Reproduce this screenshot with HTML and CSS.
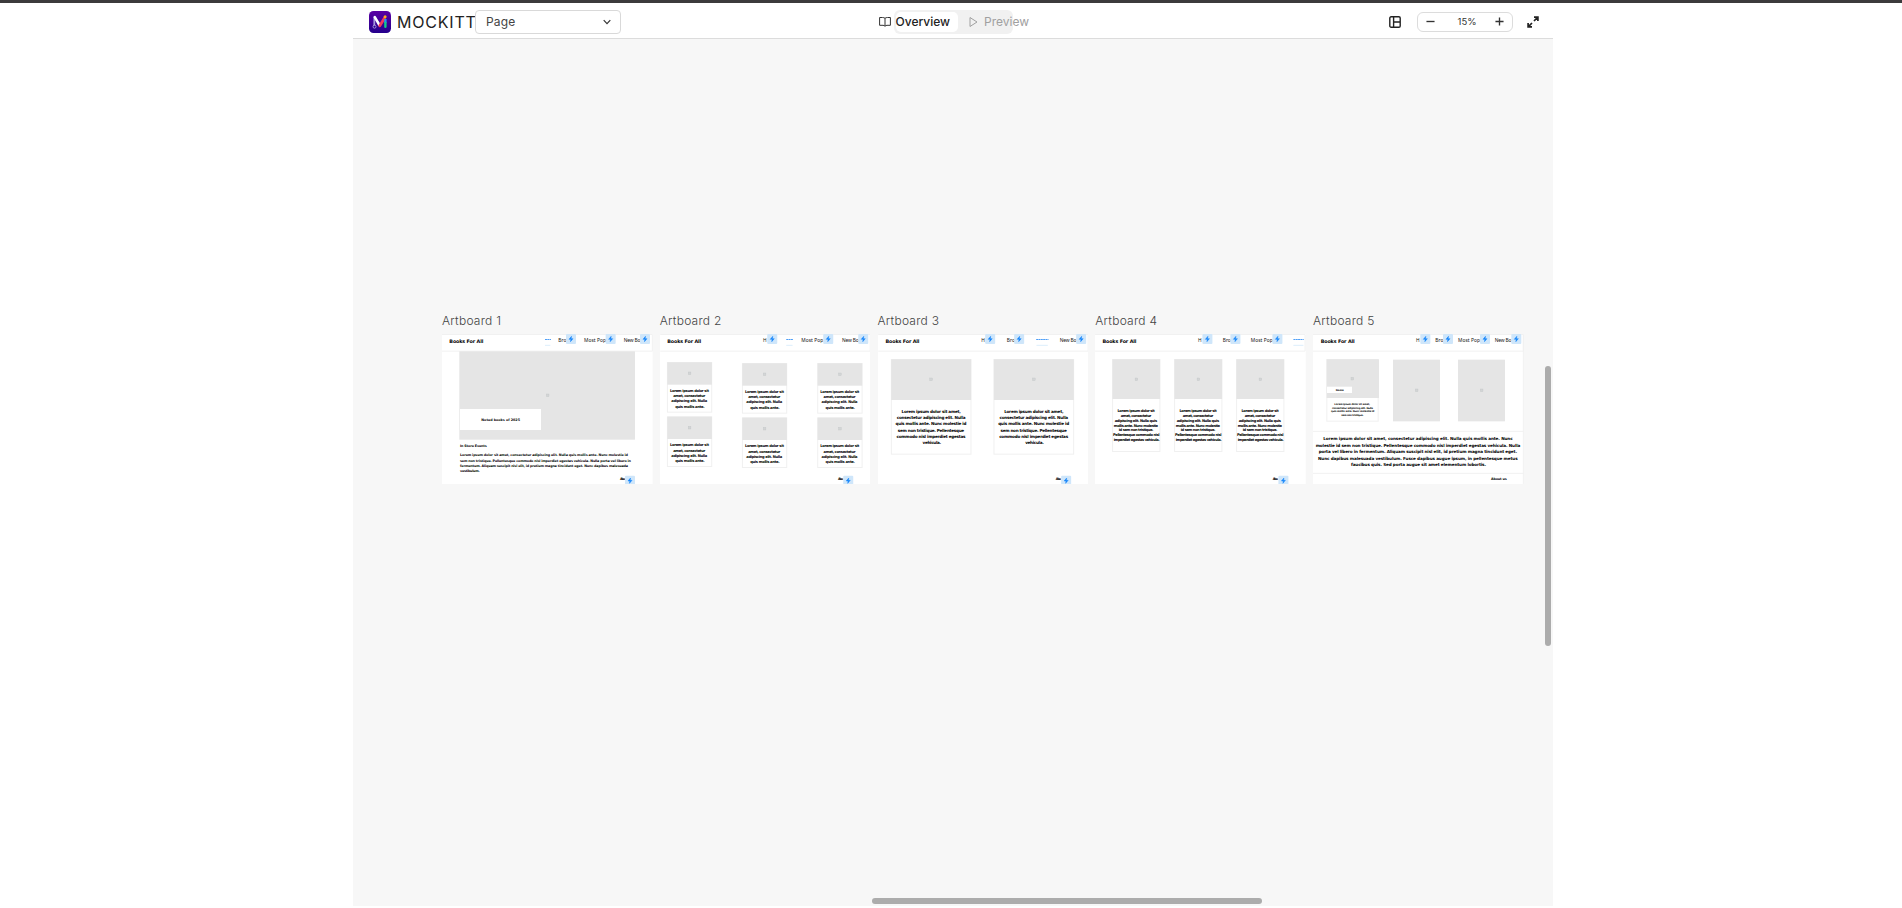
FILE: index.html
```html
<!DOCTYPE html>
<html lang="en">
<head>
<meta charset="utf-8">
<title>Mockitt</title>
<link rel="stylesheet" href="styles.css">
</head>
<body>
<div class="topline"></div>
<div class="app">
  <header class="bar">
    <div class="brand">
      <svg class="logo" viewBox="0 0 22 22"><defs><linearGradient id="lg" x1="0" y1="0" x2="0" y2="1"><stop offset="0" stop-color="#5a00a4"/><stop offset="1" stop-color="#24008c"/></linearGradient></defs><rect width="22" height="22" rx="4.500" fill="url(#lg)"/><path d="M5.300 6.500v9.500" stroke="#a596dc" stroke-width="1.800" stroke-linecap="round"/><path d="M5.800 6.200l4.600 7.800" stroke="#fff" stroke-width="2.600" stroke-linecap="round"/><path d="M15.500 7l-4.700 7.800" stroke="#f0385c" stroke-width="2.800" stroke-linecap="round"/><path d="M16.400 8v4" stroke="#2196f3" stroke-width="2.400"/><path d="M16.400 12v3.800" stroke="#10c98a" stroke-width="2.400" stroke-linecap="round"/><circle cx="16.100" cy="5.800" r="1.500" fill="#ffb020"/><circle cx="5.500" cy="15.700" r="1.500" fill="#24008c" stroke="#cbbdf0" stroke-width=".7"/></svg>
      <span class="name">MOCKITT</span>
    </div>
    <div class="select"><span>Page</span><svg class="chev" viewBox="0 0 10 10"><path d="M1.700 3.200L5 6.600l3.300-3.400"/></svg></div>
    <nav class="tabs">
      <div class="tab active"><svg class="tico" viewBox="0 0 12 12"><path d="M6 2.300v8M6 2.300C5.300 1.700 4.500 1.500 3.500 1.500H.6v7.800h3.400c.9 0 1.600.4 2 1 .4-.6 1.100-1 2-1h3.400V1.500H8.500C7.500 1.500 6.700 1.700 6 2.300z"/></svg><span>Overview</span></div>
      <div class="tab"><svg class="tico play" viewBox="0 0 12 12"><path d="M2 1.500v9l7-4.500z"/></svg><span>Preview</span></div>
    </nav>
    <div class="tools">
      <svg class="panel" viewBox="0 0 12 12"><rect x=".8" y=".8" width="10.400" height="10.400" rx="1.300"/><path d="M4.600 1v10M4.600 6h6.400"/></svg>
      <div class="zoom"><svg class="pm" viewBox="0 0 10 10"><path d="M.5 5h9"/></svg><span>15%</span><svg class="pm" viewBox="0 0 10 10"><path d="M.5 5h9M5 .5v9"/></svg></div>
      <svg class="full" viewBox="0 0 12 12"><path d="M7 5l3.600-3.600M7 1.100h3.900V5M5 7l-3.600 3.600M1.100 7v3.900H5"/></svg>
    </div>
  </header>
  <main class="canvas">
    <svg class="defs" width="0" height="0"><defs>
      <g id="bolt"><rect width="30" height="30" rx="3" fill="#cfe6fa"/><path d="M16.500 7L9 16h5.500L13.500 23 21 14h-5.500z" fill="#1686fb" stroke="#1686fb" stroke-width="1.500"/></g>
      <g id="pic"><rect x="-4" y="-4" width="8" height="8" fill="#d3d5d6" stroke="#bfc2c4" stroke-width="1"/></g>
    </defs></svg>
    <div class="boards">
      <section class="board"><h2>Artboard 1</h2>
        <svg class="art" viewBox="21 87 632 450"><rect class="pg" x="21" y="87" width="632" height="450"/><path class="rule" d="M21 88.500H652V138.500H21"/>
          <text class="h" x="43" y="113" textLength="102">Books For All</text>
          <path class="on" d="M330 103.500h18"/><path class="soft" d="M330 121h16"/>
          <text class="n" x="370" y="110" textLength="24">Bro</text><text class="n" x="447" y="110" textLength="66">Most Pop</text><text class="n" x="566" y="110" textLength="50">New Bo</text>
          <use href="#bolt" x="393" y="87"/><use href="#bolt" x="512" y="87"/><use href="#bolt" x="615" y="87"/>
          <rect class="im" x="73" y="139" width="527" height="265"/><use href="#pic" x="338" y="271"/>
          <rect class="pg" x="75" y="312" width="243" height="63"/>
          <text class="b s" x="139" y="347" textLength="116">Noted books of 2025</text>
          <text class="b s" x="75" y="425" textLength="80">In Store Events</text>
          <text class="b s" x="75" y="452" textLength="504">Lorem ipsum dolor sit amet, consectetur adipiscing elit. Nulla quis mollis ante. Nunc molestie id</text>
          <text class="b s" x="75" y="470" textLength="513">sem non tristique. Pellentesque commodo nisl imperdiet egestas vehicula. Nulla porta vel libero in</text>
          <text class="b s" x="75" y="485" textLength="504">fermentum. Aliquam suscipit nisl elit, id pretium magna tincidunt eget. Nunc dapibus malesuada</text>
          <text class="b s" x="75" y="500" textLength="59">vestibulum.</text>
          <text class="b s" x="555" y="524" textLength="16">Abo</text><use href="#bolt" x="570" y="512"/>
        </svg></section>
      <section class="board"><h2>Artboard 2</h2>
        <svg class="art" viewBox="20.250 87 632 450"><rect class="pg" x="20" y="87" width="633" height="450"/><path class="rule" d="M21 88.500H651V138.500H21"/>
          <text class="h" x="42" y="113" textLength="102">Books For All</text>
          <path class="on" d="M399 103.500h20"/><path class="soft" d="M399 121h19"/>
          <text class="n" x="329" y="110" textLength="14">H</text><text class="n" x="444" y="110" textLength="66">Most Pop</text><text class="n" x="566" y="110" textLength="50">New Bo</text>
          <use href="#bolt" x="342" y="87"/><use href="#bolt" x="510" y="87"/><use href="#bolt" x="615" y="87"/>
          <defs><g id="book"><rect class="card" x="1.500" y="1.500" width="133" height="149"/><rect class="im" x="1" y="1" width="134" height="67"/><use href="#pic" x="68" y="34"/>
            <text class="b m" x="9" y="90" textLength="117">Lorem ipsum dolor sit</text><text class="b m" x="19" y="106" textLength="96">amet, consectetur</text><text class="b m" x="13" y="121" textLength="108">adipiscing elit. Nulla</text><text class="b m" x="25" y="137" textLength="88">quis mollis ante.</text></g></defs>
          <use href="#book" x="41" y="171"/><use href="#book" x="266" y="174"/><use href="#book" x="492" y="174"/>
          <use href="#book" x="41" y="334"/><use href="#book" x="266" y="337"/><use href="#book" x="492" y="337"/>
          <text class="b s" x="554" y="524" textLength="16">Abo</text><use href="#bolt" x="570" y="512"/>
        </svg></section>
      <section class="board"><h2>Artboard 3</h2>
        <svg class="art" viewBox="22.500 87 632 450"><rect class="pg" x="22" y="87" width="633" height="450"/><path class="rule" d="M23 88.500H653V138.500H23"/>
          <text class="h" x="45" y="113" textLength="102">Books For All</text>
          <path class="on" d="M497 103.500h37"/><path class="soft" d="M498 121h34"/>
          <text class="n" x="332" y="110" textLength="14">H</text><text class="n" x="409" y="110" textLength="24">Bro</text><text class="n" x="568" y="110" textLength="50">New Bo</text>
          <use href="#bolt" x="344" y="87"/><use href="#bolt" x="431" y="87"/><use href="#bolt" x="617" y="87"/>
          <defs><g id="wide"><rect class="card" x="1.500" y="1.500" width="239" height="284"/><rect class="im" x="1" y="1" width="240" height="122"/><use href="#pic" x="121" y="61"/>
            <text class="b l" x="32" y="163" textLength="178">Lorem ipsum dolor sit amet,</text><text class="b l" x="18" y="180" textLength="206">consectetur adipiscing elit. Nulla</text><text class="b l" x="14" y="199" textLength="213">quis mollis ante. Nunc molestie id</text><text class="b l" x="21" y="219" textLength="199">sem non tristique. Pellentesque</text><text class="b l" x="17" y="237" textLength="207">commodo nisl imperdiet egestas</text><text class="b l" x="95" y="255" textLength="56">vehicula.</text></g></defs>
          <use href="#wide" x="61" y="162"/><use href="#wide" x="369" y="162"/>
          <text class="b s" x="556" y="524" textLength="16">Abo</text><use href="#bolt" x="572" y="512"/>
        </svg></section>
      <section class="board"><h2>Artboard 4</h2>
        <svg class="art" viewBox="21.750 87 632 450"><rect class="pg" x="21" y="87" width="633" height="450"/><path class="rule" d="M22 88.500H652V138.500H22"/>
          <text class="h" x="44" y="113" textLength="102">Books For All</text>
          <path class="on" d="M617 103.500h31"/><path class="soft" d="M617 121h30"/>
          <text class="n" x="331" y="110" textLength="14">H</text><text class="n" x="405" y="110" textLength="24">Bro</text><text class="n" x="489" y="110" textLength="66">Most Pop</text>
          <use href="#bolt" x="344" y="87"/><use href="#bolt" x="428" y="87"/><use href="#bolt" x="554" y="87"/>
          <defs><g id="tall"><rect class="card" x="1.500" y="1.500" width="142" height="276"/><rect class="im" x="1" y="1" width="143" height="119"/><use href="#pic" x="73" y="61"/>
            <text class="b m" x="16" y="159" textLength="112">Lorem ipsum dolor sit</text><text class="b m" x="26" y="174" textLength="92">amet, consectetur</text><text class="b m" x="8" y="189" textLength="127">adipiscing elit. Nulla quis</text><text class="b m" x="5" y="203" textLength="133">mollis ante. Nunc molestie</text><text class="b m" x="20" y="216" textLength="104">id sem non tristique.</text><text class="b m" x="3" y="230" textLength="139">Pellentesque commodo nisl</text><text class="b m" x="5" y="246" textLength="138">imperdiet egestas vehicula.</text></g></defs>
          <use href="#tall" x="73" y="162"/><use href="#tall" x="259" y="162"/><use href="#tall" x="445" y="162"/>
          <text class="b s" x="555" y="524" textLength="16">Abo</text><use href="#bolt" x="572" y="512"/>
        </svg></section>
      <section class="board"><h2>Artboard 5</h2>
        <svg class="art" viewBox="24 87 632 450"><rect class="pg" x="24" y="87" width="632" height="450"/><path class="rule" d="M24 88.500H655V138.500H24M24 379H655M24 505H655M655 88V537"/>
          <text class="h" x="47" y="113" textLength="102">Books For All</text>
          <text class="n" x="333" y="110" textLength="14">H</text><text class="n" x="391" y="110" textLength="24">Bro</text><text class="n" x="459" y="110" textLength="66">Most Pop</text><text class="n" x="569" y="110" textLength="50">New Bo</text>
          <use href="#bolt" x="346" y="87"/><use href="#bolt" x="414" y="87"/><use href="#bolt" x="525" y="87"/><use href="#bolt" x="619" y="87"/>
          <rect class="card" x="65.500" y="163.500" width="154" height="185"/><rect class="im" x="65" y="163" width="157" height="116"/><use href="#pic" x="142" y="221"/>
          <rect class="pg" x="66" y="245" width="75" height="19"/><text class="b xs" x="92" y="258" textLength="24">Name</text>
          <text class="b xs" x="88" y="300" textLength="107">Lorem ipsum dolor sit amet,</text><text class="b xs" x="81" y="311" textLength="123">consectetur adipiscing elit. Nulla</text><text class="b xs" x="78" y="321" textLength="130">quis mollis ante. Nunc molestie id</text><text class="b xs" x="109" y="332" textLength="66">sem non tristique.</text>
          <rect class="im" x="264" y="164" width="141" height="185"/><use href="#pic" x="335" y="256"/>
          <rect class="im" x="459" y="164" width="141" height="185"/><use href="#pic" x="530" y="256"/>
          <text class="b l" x="55" y="404" textLength="568">Lorem ipsum dolor sit amet, consectetur adipiscing elit. Nulla quis mollis ante. Nunc</text>
          <text class="b l" x="32" y="425" textLength="614">molestie id sem non tristique. Pellentesque commodo nisl imperdiet egestas vehicula. Nulla</text>
          <text class="b l" x="41" y="444" textLength="595">porta vel libero in fermentum. Aliquam suscipit nisl elit, id pretium magna tincidunt eget.</text>
          <text class="b l" x="39" y="464" textLength="599">Nunc dapibus malesuada vestibulum. Fusce dapibus augue ipsum, in pellentesque metus</text>
          <text class="b l" x="138" y="482" textLength="405">faucibus quis. Sed porta augue sit amet elementum lobortis.</text>
          <text class="b s" x="558" y="524" textLength="47">About us</text>
        </svg></section>
    </div>
    <div class="vbar"></div>
    <div class="hbar"></div>
  </main>
</div>
</body>
</html>
```
FILE: styles.css
```css
* { box-sizing: border-box; }
body { margin: 0; background: #fff; font-family: Inter, "Liberation Sans", sans-serif; height: 908px; overflow: hidden; }
.topline { height: 3px; background: #3c3b3c; }
.app { width: 1200px; margin-left: 353px; height: 903px; display: flex; flex-direction: column; }
.bar { height: 36px; flex: none; border-bottom: 1px solid #dcdcdc; display: flex; align-items: center; padding: 2px 14px 0 16px; }
.brand { display: flex; align-items: center; gap: 6px; width: 106px; }
.logo { width: 22px; height: 22px; flex: none; }
.name { font-size: 16px; font-weight: 400; color: #222; letter-spacing: .8px; white-space: nowrap; }
.select { width: 146px; height: 24px; border: 1px solid #d9d9d9; border-radius: 4px; display: flex; align-items: center; justify-content: space-between; padding: 0 8px 0 10px; font-size: 12px; letter-spacing: .2px; color: #444; }
.chev { width: 10px; height: 10px; fill: none; stroke: #333; stroke-width: 1.200; }
.tabs { margin-left: 273px; width: 119px; height: 24px; background: #f1f1f1; border-radius: 6px; padding: 2px; display: flex; }
.tab { display: flex; align-items: center; gap: 5px; font-size: 12px; color: #a0a0a0; white-space: nowrap; justify-content: flex-end; flex: none; }
.tab.active { width: 62px; background: #fff; border-radius: 5px; color: #222; font-weight: 500; padding-right: 8px; }
.tab:not(.active) { margin-left: 10px; justify-content: flex-start; gap: 4px; }
.tico { width: 12px; height: 12px; flex: none; fill: none; stroke: #333; stroke-width: 1; }
.play { stroke: #a0a0a0; }
.tools { margin-left: auto; display: flex; align-items: center; }
.panel { width: 12px; height: 12px; fill: none; stroke: #222; stroke-width: 1.400; }
.zoom { margin: 0 14px 0 16px; width: 96px; height: 20px; border: 1px solid #dcdcdc; border-radius: 6px; display: flex; align-items: center; justify-content: space-between; padding: 0 8px; font-size: 9.500px; color: #333; }
.zoom span { padding-left: 4px; }
.pm { width: 9px; height: 9px; fill: none; stroke: #333; stroke-width: 1.500; }
.full { width: 12px; height: 12px; fill: none; stroke: #222; stroke-width: 1.700; }
.canvas { position: relative; flex: 1; background: #f7f7f7; overflow: hidden; padding: 275px 0 0 89px; }
.defs { position: absolute; }
.boards { display: flex; }
.board { width: 217.750px; flex: none; }
.board h2 { margin: 0; height: 20px; line-height: 13px; font-size: 12px; font-weight: 300; color: #444; letter-spacing: .25px; }
.art { display: block; width: 210.670px; height: 150px; }
.pg { fill: #fff; }
.rule { fill: none; stroke: #f1f1f1; stroke-width: 3; }
.im { fill: #e5e5e5; }
.card { fill: #fff; stroke: #f0f0f0; stroke-width: 3; }
.h { font: 700 14.500px "DejaVu Sans", sans-serif; fill: #000; }
.n { font: 400 14.500px "Noto Sans", sans-serif; fill: #111; }
.b { font-family: "DejaVu Sans", sans-serif; font-weight: 700; fill: #000; }
.xs { font-size: 7.500px; }
.s { font-size: 10px; }
.m { font-size: 11px; }
.l { font-size: 12.500px; }
.on { stroke: #2b8cf5; stroke-width: 2.500; stroke-dasharray: 6 1; }
.soft { stroke: #dceefc; stroke-width: 3; }
.vbar { position: absolute; left: 1192px; top: 327px; width: 6px; height: 280px; border-radius: 3px; background: #acacac; }
.hbar { position: absolute; left: 519px; top: 859px; width: 390px; height: 6px; border-radius: 3px; background: #acacac; }
```
